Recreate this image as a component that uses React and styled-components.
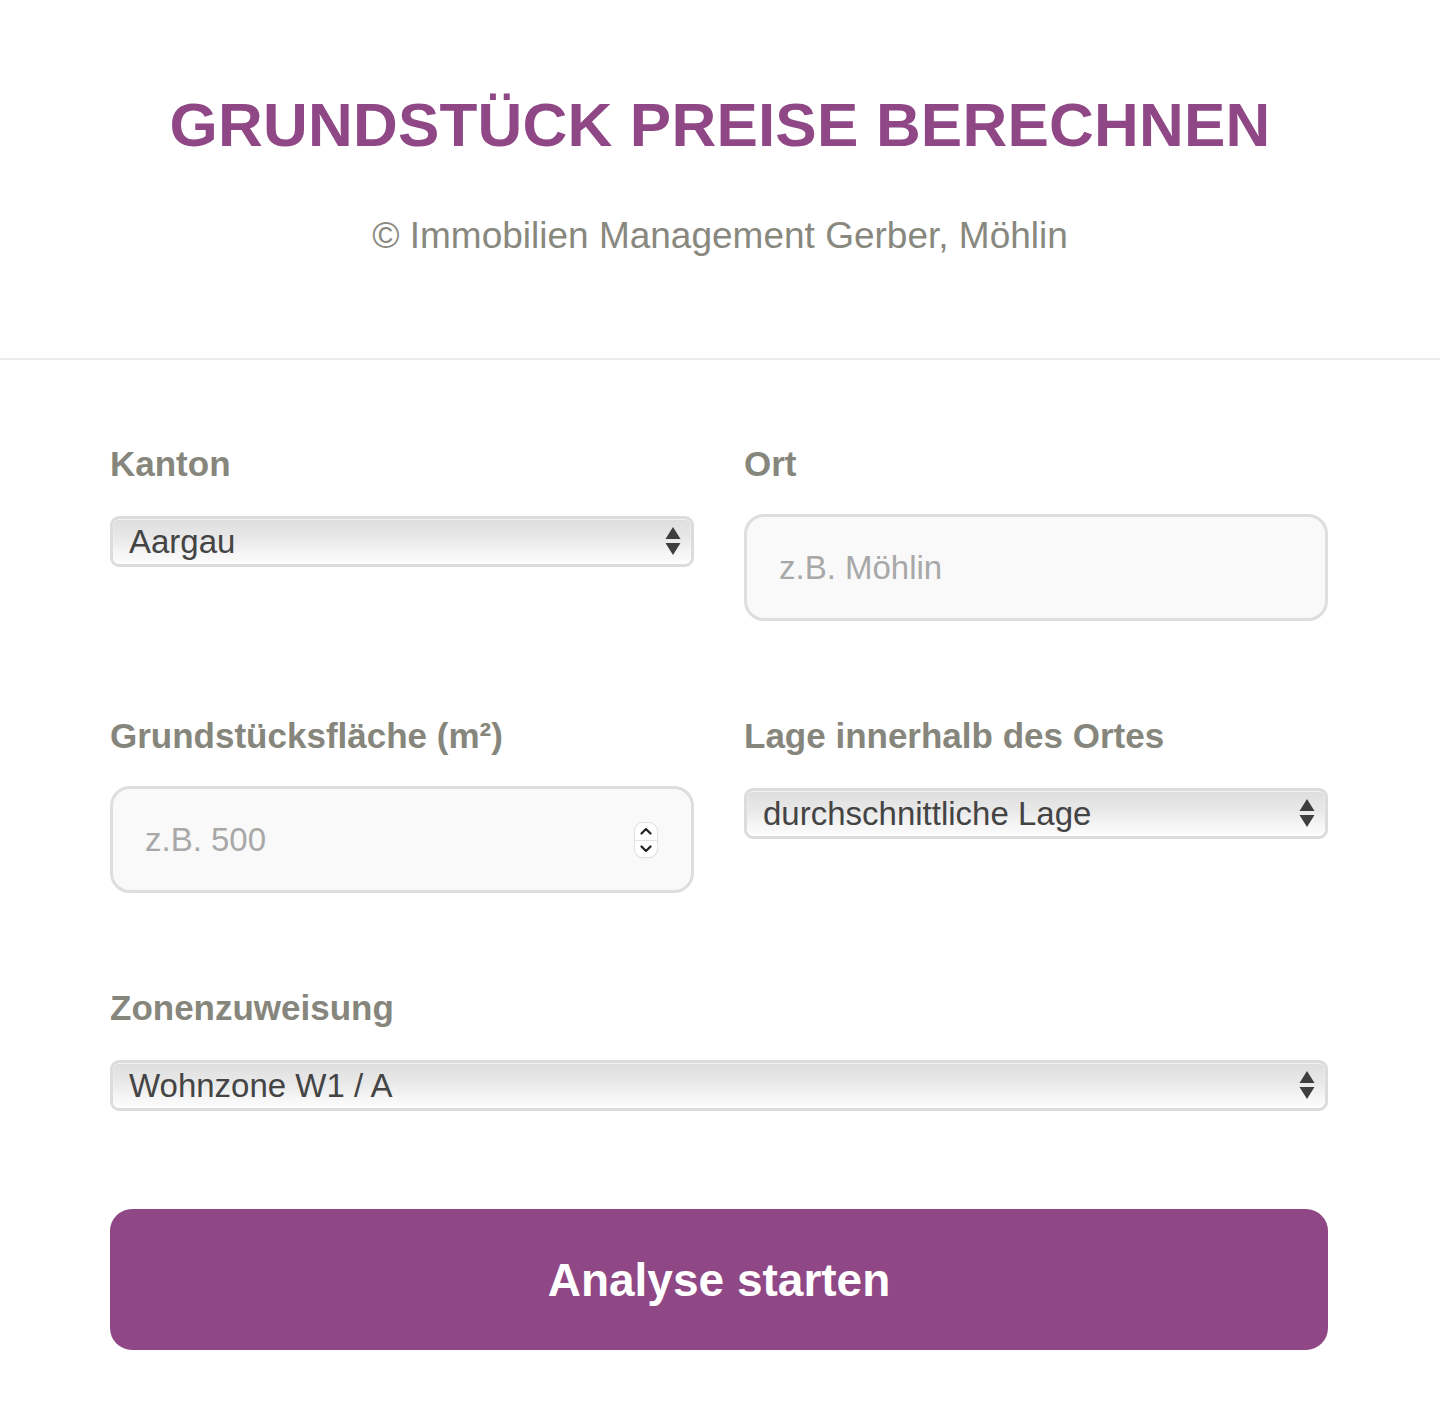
import React from "react";
import styled, { createGlobalStyle } from "styled-components";

const Global = createGlobalStyle`
  html, body { margin: 0; padding: 0; background: #fff; }
  body { font-family: "Liberation Sans", Arial, Helvetica, sans-serif; }
  * { box-sizing: border-box; }
`;

const Page = styled.div`
  width: 1440px;
  min-height: 1407px;
  background: #fff;
`;

const Header = styled.header`
  display: flex;
  flex-direction: column;
  align-items: center;
  padding: 88px 0 100px;
  border-bottom: 2px solid #ececec;
`;

const Title = styled.h1`
  margin: 0;
  font-size: 62px;
  line-height: 74px;
  font-weight: 700;
  color: #8f4786;
  letter-spacing: 0.2px;
`;

const Subtitle = styled.p`
  margin: 52px 0 0;
  font-size: 37px;
  line-height: 44px;
  color: #88887e;
`;

const Form = styled.form`
  display: grid;
  grid-template-columns: 584px 584px;
  column-gap: 50px;
  row-gap: 95px;
  padding: 84px 0 57px 110px;
`;

const Field = styled.div`
  display: flex;
  flex-direction: column;
  grid-column: ${(p) => (p.$wide ? "1 / span 2" : "auto")};
`;

const Label = styled.label`
  font-size: 35px;
  line-height: 40px;
  font-weight: 700;
  color: #86867c;
  margin-bottom: ${(p) => (p.$forSelect ? "32px" : "30px")};
`;

const SelectWrap = styled.div`
  position: relative;
  height: 51px;
`;

const Select = styled.select`
  appearance: none;
  -webkit-appearance: none;
  width: 100%;
  height: 100%;
  margin: 0;
  padding: 0 60px 0 16px;
  border: 3px solid #dcdcdc;
  border-radius: 9px;
  background: linear-gradient(#dedede 0%, #e9e9e9 45%, #f7f7f7 80%, #fbfbfb 100%);
  box-shadow: inset 0 1px 0 #f2f2f2, inset 0 -2px 2px rgba(255, 255, 255, 0.8);
  font-family: inherit;
  font-size: 33px;
  line-height: 45px;
  color: #444;
  outline: none;
`;

const Arrows = styled.svg`
  position: absolute;
  right: 13px;
  top: 11px;
  pointer-events: none;
`;

const InputWrap = styled.div`
  position: relative;
  height: 107px;
`;

const TextInput = styled.input`
  width: 100%;
  height: 100%;
  margin: 0;
  padding: 0 32px;
  border: 3px solid #dedede;
  border-radius: 20px;
  background: #f9f9f9;
  font-family: inherit;
  font-size: 33px;
  color: #444;
  outline: none;
  &::placeholder { color: #a8a8a8; }
`;

const Spinner = styled.div`
  position: absolute;
  right: 37px;
  top: 37px;
  width: 22px;
  height: 34px;
  border-radius: 8px;
  background: #fff;
  box-shadow: 0 0 0 1px #e2e2e2, 0 1px 2px rgba(0, 0, 0, 0.12);
  display: flex;
  flex-direction: column;
  overflow: hidden;
  pointer-events: none;
`;

const SpinHalf = styled.div`
  flex: 1;
  display: flex;
  align-items: center;
  justify-content: center;
  border-top: ${(p) => (p.$lower ? "1px solid #e4e4e4" : "none")};
`;

const Submit = styled.button`
  grid-column: 1 / span 2;
  height: 141px;
  margin-top: 3px;
  border: none;
  border-radius: 22px;
  background: #8f4885;
  color: #fff;
  font-family: inherit;
  font-size: 46px;
  font-weight: 700;
  cursor: pointer;
`;

function UpDown() {
  return (
    <Arrows width="16" height="29" viewBox="0 0 16 29">
      <path d="M8 0 L15.5 12 L0.5 12 Z" fill="#3e3e3e" />
      <path d="M0.5 16 L15.5 16 L8 28 Z" fill="#3e3e3e" />
    </Arrows>
  );
}

function SelectBox({ value, options }) {
  return (
    <SelectWrap>
      <Select defaultValue={value}>
        {options.map((o) => (
          <option key={o}>{o}</option>
        ))}
      </Select>
      <UpDown />
    </SelectWrap>
  );
}

function Chevron({ down }) {
  return (
    <svg width="12" height="8" viewBox="0 0 12 8">
      <path
        d={down ? "M1.5 1.5 L6 6 L10.5 1.5" : "M1.5 6.5 L6 2 L10.5 6.5"}
        fill="none"
        stroke="#222"
        strokeWidth="2.2"
        strokeLinecap="round"
        strokeLinejoin="round"
      />
    </svg>
  );
}

export default function App() {
  return (
    <Page>
      <Global />
      <Header>
        <Title>GRUNDSTÜCK PREISE BERECHNEN</Title>
        <Subtitle>© Immobilien Management Gerber, Möhlin</Subtitle>
      </Header>
      <Form onSubmit={(e) => e.preventDefault()}>
        <Field>
          <Label $forSelect>Kanton</Label>
          <SelectBox value="Aargau" options={["Aargau", "Basel-Land", "Basel-Stadt", "Bern", "Solothurn", "Zürich"]} />
        </Field>
        <Field>
          <Label>Ort</Label>
          <InputWrap>
            <TextInput type="text" placeholder="z.B. Möhlin" />
          </InputWrap>
        </Field>
        <Field>
          <Label>Grundstücksfläche (m²)</Label>
          <InputWrap>
            <TextInput type="text" inputMode="numeric" placeholder="z.B. 500" />
            <Spinner>
              <SpinHalf>
                <Chevron />
              </SpinHalf>
              <SpinHalf $lower>
                <Chevron down />
              </SpinHalf>
            </Spinner>
          </InputWrap>
        </Field>
        <Field>
          <Label $forSelect>Lage innerhalb des Ortes</Label>
          <SelectBox
            value="durchschnittliche Lage"
            options={["einfache Lage", "durchschnittliche Lage", "gute Lage", "sehr gute Lage"]}
          />
        </Field>
        <Field $wide>
          <Label $forSelect>Zonenzuweisung</Label>
          <SelectBox
            value="Wohnzone W1 / A"
            options={["Wohnzone W1 / A", "Wohnzone W2 / B", "Wohnzone W3 / C", "Gewerbezone", "Industriezone"]}
          />
        </Field>
        <Submit type="submit">Analyse starten</Submit>
      </Form>
    </Page>
  );
}
